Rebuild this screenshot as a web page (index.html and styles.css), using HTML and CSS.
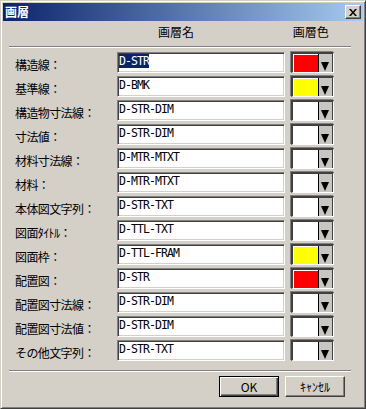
FILE: index.html
```html
<!DOCTYPE html>
<html lang="ja">
<head>
<meta charset="UTF-8" />
<title>画層</title>
<link rel="stylesheet" href="styles.css">
</head>
<body>

<div class="dialog">
  <div class="titlebar">
    <span class="title">画層</span>
    <button class="close" aria-label="閉じる">
      <svg width="8" height="7" viewBox="0 0 8 7"><path d="M0 0h2l2 2.5L6 0h2L5 3.5 8 7H6L4 4.5 2 7H0l3-3.5z" fill="#000"/></svg>
    </button>
  </div>

  <div class="content">
    <div class="head">
      <span class="head-name">画層名</span>
      <span class="head-color">画層色</span>
    </div>
    <div class="sep"></div>

    <div class="rows">
      <label>構造線：</label>
      <div class="field"><span class="sel">D-STR</span></div>
      <div class="swatch"><span class="chip red"></span><span class="drop"><i></i></span></div>

      <label>基準線：</label>
      <div class="field">D-BMK</div>
      <div class="swatch"><span class="chip yellow"></span><span class="drop"><i></i></span></div>

      <label>構造物寸法線：</label>
      <div class="field">D-STR-DIM</div>
      <div class="swatch"><span class="chip"></span><span class="drop"><i></i></span></div>

      <label>寸法値：</label>
      <div class="field">D-STR-DIM</div>
      <div class="swatch"><span class="chip"></span><span class="drop"><i></i></span></div>

      <label>材料寸法線：</label>
      <div class="field">D-MTR-MTXT</div>
      <div class="swatch"><span class="chip"></span><span class="drop"><i></i></span></div>

      <label>材料：</label>
      <div class="field">D-MTR-MTXT</div>
      <div class="swatch"><span class="chip"></span><span class="drop"><i></i></span></div>

      <label>本体図文字列：</label>
      <div class="field">D-STR-TXT</div>
      <div class="swatch"><span class="chip"></span><span class="drop"><i></i></span></div>

      <label>図面ﾀｲﾄﾙ：</label>
      <div class="field">D-TTL-TXT</div>
      <div class="swatch"><span class="chip"></span><span class="drop"><i></i></span></div>

      <label>図面枠：</label>
      <div class="field">D-TTL-FRAM</div>
      <div class="swatch"><span class="chip yellow"></span><span class="drop"><i></i></span></div>

      <label>配置図：</label>
      <div class="field">D-STR</div>
      <div class="swatch"><span class="chip red"></span><span class="drop"><i></i></span></div>

      <label>配置図寸法線：</label>
      <div class="field">D-STR-DIM</div>
      <div class="swatch"><span class="chip"></span><span class="drop"><i></i></span></div>

      <label>配置図寸法値：</label>
      <div class="field">D-STR-DIM</div>
      <div class="swatch"><span class="chip"></span><span class="drop"><i></i></span></div>

      <label>その他文字列：</label>
      <div class="field">D-STR-TXT</div>
      <div class="swatch"><span class="chip"></span><span class="drop"><i></i></span></div>
    </div>

    <div class="sep sep-bottom"></div>

    <div class="buttons">
      <button class="btn btn-default">OK</button>
      <button class="btn">ｷｬﾝｾﾙ</button>
    </div>
  </div>
</div>

</body>
</html>
```

FILE: styles.css
```css
body {
  margin: 0;
  background: #d4d0c8;
  font-family: "Noto Sans CJK JP", "Liberation Sans", sans-serif;
  font-size: 12px;
  color: #000;
}
.dialog {
  width: 366px;
  height: 409px;
  box-sizing: border-box;
  padding: 2px;
  background: #d4d0c8;
  border: 1px solid;
  border-color: #d4d0c8 #404040 #404040 #d4d0c8;
  box-shadow: inset 1px 1px #fff, inset -1px -1px #808080;
}
.titlebar {
  height: 18px;
  display: flex;
  align-items: center;
  justify-content: space-between;
  padding: 0 2px;
  background: linear-gradient(to right, #0a246a, #a6caf0);
}
.title {
  color: #fff;
  font-weight: bold;
  font-size: 12px;
  line-height: 18px;
}
.close {
  width: 16px;
  height: 14px;
  padding: 0;
  display: flex;
  align-items: center;
  justify-content: center;
  background: #d4d0c8;
  border: 1px solid;
  border-color: #fff #404040 #404040 #fff;
  box-shadow: inset -1px -1px #808080;
}
.content {
  padding: 0 12px 0 6px;
}
.head {
  height: 25px;
  box-sizing: border-box;
  padding-top: 1px;
  line-height: 20px;
}
.head-name {
  margin-left: 149px;
}
.head-color {
  margin-left: 96px;
}
.sep {
  height: 0;
  border-top: 1px solid #808080;
  border-bottom: 1px solid #fff;
}
.rows {
  margin: 4px 0 0 6px;
  display: grid;
  grid-template-columns: 102px 168px 49px;
  grid-auto-rows: 21px;
  row-gap: 3px;
}
.rows label {
  padding-top: 3px;
  line-height: 19px;
  letter-spacing: -0.6px;
  white-space: nowrap;
}
.field {
  box-sizing: border-box;
  background: #fff;
  border: 1px solid;
  border-color: #808080 #fff #fff #808080;
  box-shadow: inset 1px 1px #404040, inset -1px -1px #d4d0c8;
  padding: 1px 2px 0 1px;
  font-family: "DejaVu Sans Mono", "Liberation Mono", monospace;
  font-size: 11.5px;
  letter-spacing: -0.92px;
  line-height: 15px;
}
.sel {
  background: #0a246a;
  color: #fff;
}
.swatch {
  margin-left: 6px;
  box-sizing: border-box;
  display: flex;
  background: #fff;
  border-style: solid;
  border-width: 2px 1px 1px 2px;
  border-color: #404040 #fff #fff #404040;
  box-shadow: -1px -1px #808080;
}
.chip {
  flex: 1;
  margin: 1px 0 0 1px;
  background: #fff;
}
.chip.red { background: #ff0000; }
.chip.yellow { background: #ffff00; }
.drop {
  width: 11px;
  background: #c8c6c2;
  border-left: 1px solid #000;
  border-right: 1px solid #404040;
  display: flex;
  align-items: flex-end;
  padding: 0 0 1px 2px;
  box-sizing: content-box;
}
.drop i {
  width: 0;
  height: 0;
  border-left: 4px solid transparent;
  border-right: 4px solid transparent;
  border-top: 9px solid #000;
}
.sep-bottom {
  margin-top: 9px;
}
.buttons {
  margin-top: 4px;
  padding-right: 6px;
  display: flex;
  justify-content: flex-end;
  gap: 6px;
}
.btn {
  width: 60px;
  height: 21px;
  padding: 0;
  font-family: "Noto Sans CJK JP", "Liberation Sans", sans-serif;
  font-size: 12px;
  color: #000;
  background: #d4d0c8;
  border: 1px solid;
  border-color: #fff #404040 #404040 #fff;
  box-shadow: inset -1px -1px #808080;
}
.btn-default {
  border: 1px solid #000;
  box-shadow: inset 1px 1px #fff, inset -1px -1px #404040, inset -2px -2px #808080;
}
```
